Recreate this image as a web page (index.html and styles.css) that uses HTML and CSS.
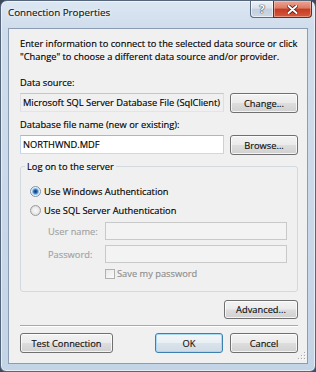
FILE: index.html
```html
<!DOCTYPE html>
<html>
<head>
<meta charset="utf-8">
<title>Connection Properties</title>
<link rel="stylesheet" href="styles.css">
</head>
<body>
<div class="window">
  <div class="titlebar">
    <span class="title">Connection Properties</span>
    <div class="caption">
      <div class="cbtn help">?</div>
      <div class="cbtn close">
        <svg width="11" height="9" viewBox="0 0 11 9">
          <path d="M1.5 1 L9.5 8 M9.5 1 L1.5 8" stroke="#4a1a12" stroke-width="3.6" stroke-linecap="round" fill="none"/>
          <path d="M1.5 1 L9.5 8 M9.5 1 L1.5 8" stroke="#ffffff" stroke-width="2" stroke-linecap="round" fill="none"/>
        </svg>
      </div>
    </div>
  </div>
  <div class="client">
    <p class="intro">Enter information to connect to the selected data source or click<br>"Change" to choose a different data source and/or provider.</p>
    <div class="label lbl-ds">Data source:</div>
    <div class="row">
      <div class="field readonly">Microsoft SQL Server Database File (SqlClient)</div>
      <div class="btn">Change...</div>
    </div>
    <div class="label lbl-db">Database file name (new or existing):</div>
    <div class="row row-db">
      <div class="field edit">NORTHWND.MDF</div>
      <div class="btn">Browse...</div>
    </div>
    <fieldset class="group">
      <legend>Log on to the server</legend>
      <div class="opt"><span class="radio on"></span>Use Windows Authentication</div>
      <div class="opt opt2"><span class="radio"></span>Use SQL Server Authentication</div>
      <div class="cred"><span class="clabel">User name:</span><span class="field disabled"></span></div>
      <div class="cred cred2"><span class="clabel">Password:</span><span class="field disabled"></span></div>
      <div class="save"><span class="check"></span>Save my password</div>
    </fieldset>
    <div class="adv-row"><div class="btn adv">Advanced...</div></div>
    <div class="sep"></div>
    <div class="bottom">
      <div class="btn test">Test Connection</div>
      <div class="btn ok">OK</div>
      <div class="btn cancel">Cancel</div>
    </div>
    <svg class="grip" width="10" height="10" viewBox="0 0 10 10">
      <g fill="#ffffff">
        <rect x="9" y="1" width="1" height="1"/>
        <rect x="6" y="4" width="1" height="1"/><rect x="9" y="4" width="1" height="1"/>
        <rect x="3" y="7" width="1" height="1"/><rect x="6" y="7" width="1" height="1"/><rect x="9" y="7" width="1" height="1"/>
      </g>
      <g fill="#a6aab0">
        <rect x="8" y="0" width="1" height="1"/>
        <rect x="5" y="3" width="1" height="1"/><rect x="8" y="3" width="1" height="1"/>
        <rect x="2" y="6" width="1" height="1"/><rect x="5" y="6" width="1" height="1"/><rect x="8" y="6" width="1" height="1"/>
      </g>
    </svg>
  </div>
</div>
</body>
</html>
```

FILE: styles.css
```css
* { box-sizing: border-box; }
html, body { margin: 0; padding: 0; }
body {
  width: 316px;
  height: 372px;
  overflow: hidden;
  background: #3d4a5c;
  font-family: "Open Sans", "Noto Sans", sans-serif;
  font-size: 9.3px;
  color: #000;
  -webkit-text-stroke: 0.15px currentColor;
}
.window {
  width: 316px;
  height: 372px;
  border: 1px solid #55657a;
  border-radius: 7px 7px 6px 6px;
  background: linear-gradient(180deg, #dce7f3 0, #d0ddec 26px, #c4d4e7 100%);
  box-shadow: inset 0 0 0 1px rgba(255, 255, 255, 0.55);
  padding: 0 7px 7px;
  display: flex;
  flex-direction: column;
}
.titlebar {
  height: 27px;
  flex-shrink: 0;
  display: flex;
  align-items: flex-start;
}
.title {
  margin-top: 5px;
  line-height: 14px;
  font-size: 9.8px;
  color: #151515;
  text-shadow: 0 0 5px #fff, 0 0 3px #fff;
}
.caption {
  margin-left: auto;
  margin-right: -4px;
  display: flex;
}
.cbtn {
  height: 17px;
  border: 1px solid #5b6b80;
  border-top: none;
  display: flex;
  align-items: center;
  justify-content: center;
}
.help {
  width: 23px;
  border-right: none;
  border-radius: 0 0 0 4px;
  background: linear-gradient(180deg, #eef2f7 0, #d9e1eb 45%, #c2cfdd 50%, #ccd8e6 100%);
  box-shadow: inset 0 0 0 1px rgba(255, 255, 255, 0.6);
  color: #fff;
  font-weight: bold;
  font-size: 11px;
  line-height: 12px;
  -webkit-text-stroke: 0;
  text-shadow: 0 0 1px #3b4656, 0 0 1px #3b4656, 0 0 1px #3b4656;
}
.close {
  width: 39px;
  border-color: #6b2a20;
  border-radius: 0 0 4px 0;
  background: linear-gradient(180deg, #eba596 0, #dd7a63 45%, #c63a22 50%, #d35a3f 100%);
  box-shadow: inset 0 0 0 1px rgba(255, 220, 210, 0.45);
}
.client {
  flex: 1;
  position: relative;
  border: 1px solid #8c9db3;
  background: #f0f0f0;
  padding: 8px 9px 10px 11px;
  display: flex;
  flex-direction: column;
}
.intro {
  margin: 0;
  line-height: 13px;
  white-space: nowrap;
}
.label {
  line-height: 13px;
}
.lbl-ds { margin-top: 13px; }
.lbl-db { margin-top: 5px; }
.row {
  margin-top: 4px;
  display: flex;
  gap: 6px;
  align-items: flex-start;
}
.field {
  display: block;
  height: 19px;
  padding: 0 2px;
  line-height: 17px;
  white-space: nowrap;
  overflow: hidden;
  border: 1px solid;
}
.readonly {
  width: 204px;
  background: #f0f0f0;
  border-color: #c3c6cc #dcdee2 #e2e4e8 #dcdee2;
}
.edit {
  width: 204px;
  background: #fff;
  border-color: #9fbad6 #c0d4e9 #c8daed #c0d4e9;
}
.btn {
  width: 68px;
  height: 20px;
  border: 1px solid #707070;
  border-radius: 3px;
  background: linear-gradient(180deg, #f3f3f3 0, #ebebeb 48%, #dddddd 52%, #d0d0d0 100%);
  box-shadow: inset 0 0 0 1px rgba(255, 255, 255, 0.75);
  display: flex;
  align-items: center;
  justify-content: center;
  line-height: 13px;
  color: #111;
}
.group {
  margin: 5px 0 0;
  padding: 11px 10px 11px 8px;
  min-width: 0;
  border: 1px solid #d2d9df;
  border-radius: 3px;
}
.group legend {
  margin-left: -4px;
  padding: 0 2px;
  line-height: 13px;
}
.opt {
  height: 15px;
  display: flex;
  align-items: center;
}
.opt2 { margin-top: 4px; }
.radio {
  width: 11px;
  height: 11px;
  margin: 0 3px 0 1px;
  border: 1px solid #9a9ca0;
  border-radius: 50%;
  background: radial-gradient(circle at 50% 50%, #f8f8f8 0, #ececec 3px, #d6d6d6 5px);
}
.radio.on {
  border-color: #7f93a8;
  background: radial-gradient(circle at 50% 50%, #0d3a6a 0, #2a6bb0 1.8px, #8fbde6 3px, #eef4fa 4px, #dde3ea 5px);
}
.cred {
  margin-top: 4px;
  height: 18px;
  padding-left: 19px;
  display: flex;
  align-items: center;
}
.cred2 { margin-top: 5px; }
.clabel {
  width: 57px;
  color: #a2a2a2;
}
.disabled {
  width: 183px;
  height: 18px;
  background: #f3f3f3;
  border-color: #c9c9c9;
}
.save {
  margin-top: 4px;
  height: 13px;
  padding-left: 76px;
  display: flex;
  align-items: center;
  color: #8e8e8e;
}
.check {
  width: 10px;
  height: 10px;
  margin-right: 2px;
  border: 1px solid #b1b1b1;
  background: linear-gradient(135deg, #e8e8e8, #fbfbfb);
}
.adv-row {
  margin-top: 8px;
  display: flex;
  justify-content: flex-end;
}
.adv {
  width: 74px;
  height: 19px;
}
.sep {
  margin-top: 6px;
  height: 2px;
  border-top: 1px solid #a9a9a9;
  border-bottom: 1px solid #ffffff;
}
.bottom {
  margin-top: 6px;
  display: flex;
}
.test { width: 93px; }
.ok {
  margin-left: auto;
  border-color: #3c7fb1;
  background: linear-gradient(180deg, #f2f6f9 0, #e9eff4 48%, #d9e3eb 52%, #cfdce6 100%);
  box-shadow: inset 0 0 0 1px #a7dbf5;
}
.cancel { margin-left: 7px; }
.grip {
  position: absolute;
  right: 1px;
  bottom: 1px;
}
```
